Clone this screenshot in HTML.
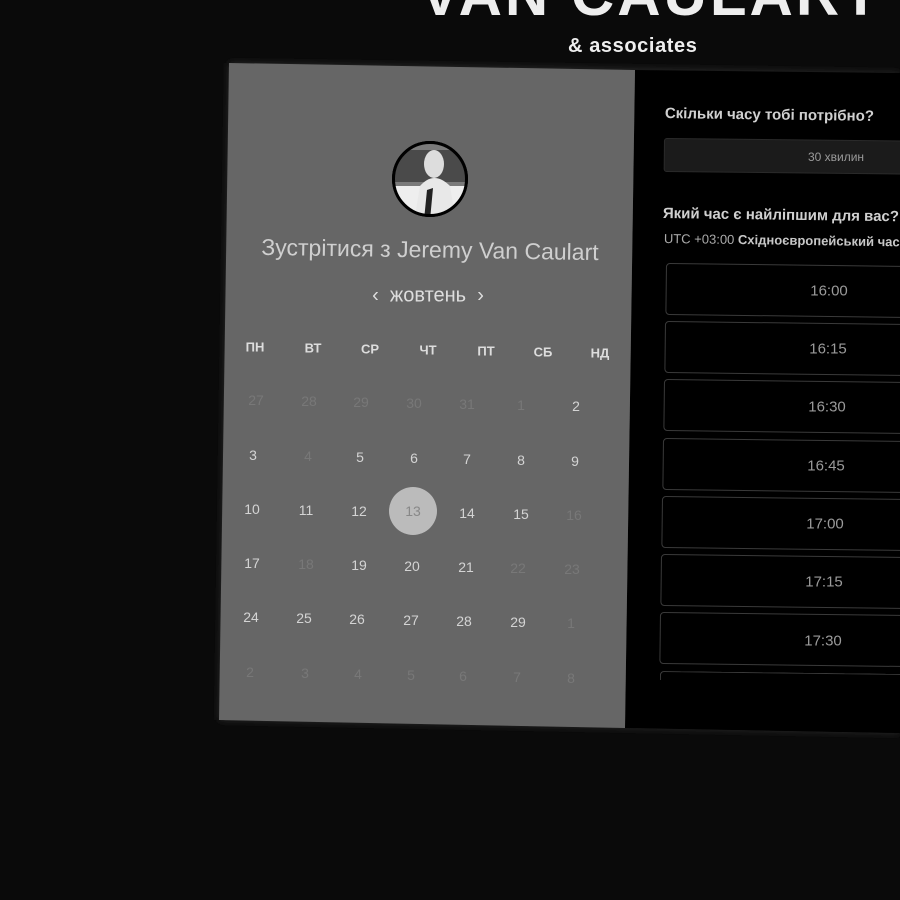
<!DOCTYPE html>
<html><head><meta charset="utf-8"><style>
html,body{margin:0;padding:0;width:900px;height:900px;overflow:hidden;background:#0a0a0a;font-family:"Liberation Sans","DejaVu Sans",sans-serif}
.a{position:absolute;white-space:nowrap;transform:translate(-50%,-50%)}
.l{position:absolute;white-space:nowrap}
.d{color:#d4d4d4;font-size:14px}
.m{color:#787878}
.h{color:#dddddd;font-size:13px;font-weight:bold}
.slot{position:absolute;height:52px;width:260px;border:1px solid #3a3a3a;border-radius:4px;box-sizing:border-box}
.st{color:#9a9a9a;font-size:15px}
</style></head><body>
<svg width="900" height="900" style="position:absolute;left:0;top:0">
<defs><filter id="g" x="-10%" y="-10%" width="120%" height="120%"><feGaussianBlur stdDeviation="4"/></filter>
<clipPath id="c"><circle cx="430" cy="179" r="36"/></clipPath></defs>
<polygon points="229,63 900,73 900,733 219,720" fill="#2a2a2a" filter="url(#g)"/>
<polygon points="635,70 900,73 900,733 625,728" fill="#000"/>
<polygon points="229,63 635,70 625,728 219,720" fill="#666"/>
<circle cx="430" cy="179" r="38" fill="#000"/>
<g clip-path="url(#c)">
<rect x="390" y="140" width="80" height="80" fill="#7a7a7a"/>
<rect x="390" y="150" width="80" height="32" fill="#4a4a4a"/>
<rect x="390" y="186" width="80" height="35" fill="#eee"/>
<ellipse cx="434" cy="164" rx="10" ry="14" fill="#ddd"/>
<path d="M414 222 L420 186 Q434 170 450 186 L456 222 Z" fill="#e8e8e8"/>
<path d="M424 220 L427 190 L433 188 L430 220Z" fill="#222"/>
</g>
<circle cx="430" cy="179" r="36.5" fill="none" stroke="#000" stroke-width="3"/>
<circle cx="413" cy="511" r="24" fill="#bbb"/>
</svg>
<div class="l" style="left:420px;top:-40px;color:#eee;font-size:60px;font-weight:bold;letter-spacing:3px">VAN CAULART</div>
<div class="l" style="left:568px;top:35px;color:#eee;font-size:20px;font-weight:bold;letter-spacing:0.6px">&amp; associates</div>
<div class="a" style="left:430px;top:250px;color:#cfcfcf;font-size:23px;transform:translate(-50%,-50%) rotate(0.9deg)">Зустрітися з Jeremy Van Caulart</div>
<div class="a" style="left:428px;top:296px;color:#ddd;font-size:20px">‹&nbsp;&nbsp;жовтень&nbsp;&nbsp;›</div>
<div class="a h" style="left:255px;top:347px">ПН</div>
<div class="a h" style="left:313px;top:348px">ВТ</div>
<div class="a h" style="left:370px;top:349px">СР</div>
<div class="a h" style="left:428px;top:350px">ЧТ</div>
<div class="a h" style="left:486px;top:351px">ПТ</div>
<div class="a h" style="left:543px;top:352px">СБ</div>
<div class="a h" style="left:600px;top:353px">НД</div>

<div class="a d m" style="left:256px;top:400px">27</div>
<div class="a d m" style="left:309px;top:401px">28</div>
<div class="a d m" style="left:361px;top:402px">29</div>
<div class="a d m" style="left:414px;top:403px">30</div>
<div class="a d m" style="left:467px;top:404px">31</div>
<div class="a d m" style="left:521px;top:405px">1</div>
<div class="a d" style="left:576px;top:406px">2</div>

<div class="a d" style="left:253px;top:455px">3</div>
<div class="a d m" style="left:308px;top:456px">4</div>
<div class="a d" style="left:360px;top:457px">5</div>
<div class="a d" style="left:414px;top:458px">6</div>
<div class="a d" style="left:467px;top:459px">7</div>
<div class="a d" style="left:521px;top:460px">8</div>
<div class="a d" style="left:575px;top:461px">9</div>

<div class="a d" style="left:252px;top:509px">10</div>
<div class="a d" style="left:306px;top:510px">11</div>
<div class="a d" style="left:359px;top:511px">12</div>
<div class="a d" style="left:413px;top:511px;color:#888">13</div>
<div class="a d" style="left:467px;top:513px">14</div>
<div class="a d" style="left:521px;top:514px">15</div>
<div class="a d m" style="left:574px;top:515px">16</div>

<div class="a d" style="left:252px;top:563px">17</div>
<div class="a d m" style="left:306px;top:564px">18</div>
<div class="a d" style="left:359px;top:565px">19</div>
<div class="a d" style="left:412px;top:566px">20</div>
<div class="a d" style="left:466px;top:567px">21</div>
<div class="a d m" style="left:518px;top:568px">22</div>
<div class="a d m" style="left:572px;top:569px">23</div>

<div class="a d" style="left:251px;top:617px">24</div>
<div class="a d" style="left:304px;top:618px">25</div>
<div class="a d" style="left:357px;top:619px">26</div>
<div class="a d" style="left:411px;top:620px">27</div>
<div class="a d" style="left:464px;top:621px">28</div>
<div class="a d" style="left:518px;top:622px">29</div>
<div class="a d m" style="left:571px;top:623px">1</div>

<div class="a d m" style="left:250px;top:672px">2</div>
<div class="a d m" style="left:305px;top:673px">3</div>
<div class="a d m" style="left:358px;top:674px">4</div>
<div class="a d m" style="left:411px;top:675px">5</div>
<div class="a d m" style="left:463px;top:676px">6</div>
<div class="a d m" style="left:517px;top:677px">7</div>
<div class="a d m" style="left:571px;top:678px">8</div>

<div class="l" style="left:665px;top:105px;color:#d0d0d0;font-size:15px;font-weight:bold;transform:rotate(0.8deg);transform-origin:0 0">Скільки часу тобі потрібно?</div>
<div class="l" style="left:664px;top:138px;width:260px;height:34px;background:#1b1b1b;border:1px solid #2a2a2a;border-radius:3px;box-sizing:border-box;transform:rotate(0.6deg);transform-origin:0 0"></div>
<div class="a" style="left:836px;top:157px;color:#9a9a9a;font-size:12px">30 хвилин</div>
<div class="l" style="left:663px;top:205px;color:#d0d0d0;font-size:15px;font-weight:bold;transform:rotate(0.8deg);transform-origin:0 0">Який час є найліпшим для вас?</div>
<div class="l" style="left:664px;top:231px;color:#aaa;font-size:13px;transform:rotate(0.8deg);transform-origin:0 0">UTC +03:00 <b style="color:#c8c8c8">Східноєвропейський час</b></div>

<div class="slot" style="left:666px;top:263px;transform:rotate(0.7deg);transform-origin:0 0"></div>
<div class="a st" style="left:829px;top:291px">16:00</div>
<div class="slot" style="left:665px;top:321px;transform:rotate(0.7deg);transform-origin:0 0"></div>
<div class="a st" style="left:828px;top:349px">16:15</div>
<div class="slot" style="left:664px;top:379px;transform:rotate(0.7deg);transform-origin:0 0"></div>
<div class="a st" style="left:827px;top:407px">16:30</div>
<div class="slot" style="left:663px;top:438px;transform:rotate(0.7deg);transform-origin:0 0"></div>
<div class="a st" style="left:826px;top:466px">16:45</div>
<div class="slot" style="left:662px;top:496px;transform:rotate(0.7deg);transform-origin:0 0"></div>
<div class="a st" style="left:825px;top:524px">17:00</div>
<div class="slot" style="left:661px;top:554px;transform:rotate(0.7deg);transform-origin:0 0"></div>
<div class="a st" style="left:824px;top:582px">17:15</div>
<div class="slot" style="left:660px;top:612px;transform:rotate(0.7deg);transform-origin:0 0"></div>
<div class="a st" style="left:823px;top:641px">17:30</div>
<div class="slot" style="left:660px;top:671px;height:10px;border-bottom:none;border-radius:4px 4px 0 0;transform:rotate(0.7deg);transform-origin:0 0"></div>
<svg width="900" height="900" style="position:absolute;left:0;top:0"><polygon points="640,680 900,680 900,733 640,728" fill="#000"/></svg>
</body></html>
